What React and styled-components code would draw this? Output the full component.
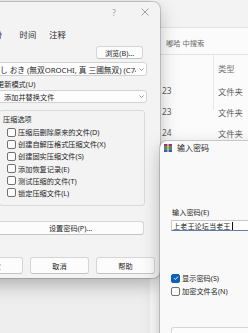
import React from 'react';
import styled, { createGlobalStyle } from 'styled-components';

const GlobalStyle = createGlobalStyle`
  html, body { margin: 0; padding: 0; }
  body {
    background: #efefef;
    font-family: "Noto Sans", "Noto Sans CJK SC", sans-serif;
  }
`;

const Screen = styled.div`
  position: relative;
  width: 248px;
  height: 333px;
  overflow: hidden;
  background: #eeeeee;
`;

/* ---------- explorer window behind ---------- */

const Explorer = styled.div`
  position: absolute;
  left: 150px;
  top: 0;
  width: 110px;
  height: 333px;
  background: #fbfbfb;
  display: flex;
  flex-direction: column;
  color: #4a4a4a;
  font-size: 8.3px;
`;

const ExToolbar = styled.div`
  flex: none;
  height: 27px;
  background: #f3f3f3;
  border-bottom: 1px solid #e2e2e2;
`;

const SearchRow = styled.div`
  flex: none;
  height: 27px;
  box-sizing: border-box;
  padding: 3px 0 0 16px;
  display: flex;
  align-items: center;
  border-bottom: 1px solid #e4e4e4;
  color: #6a6a6a;
  font-size: 7.3px;
`;

const List = styled.div`
  position: relative;
  display: flex;
  flex-direction: column;
`;

const ColDivider = styled.div`
  position: absolute;
  left: 63px;
  top: 0;
  width: 1px;
  height: 55px;
  background: #e6e6e6;
`;

const ListRow = styled.div`
  height: ${p => p.$h}px;
  display: grid;
  grid-template-columns: 63px 1fr;
  align-items: center;
  color: ${p => (p.$head ? '#777' : '#5a5a5a')};
`;

const NameCell = styled.span`
  padding-left: 12px;
`;

const TypeCell = styled.span`
  padding-left: 5px;
`;

/* ---------- dialogs ---------- */

const Dialog = styled.div`
  position: absolute;
  left: ${p => p.$x}px;
  top: ${p => p.$y}px;
  width: ${p => p.$w}px;
  height: ${p => p.$h}px;
  box-sizing: border-box;
  background: ${p => p.$bg};
  border-radius: 7px;
  box-shadow: 0 0 0 1px rgba(0, 0, 0, 0.16), 0 7px 18px rgba(0, 0, 0, 0.26);
  display: flex;
  flex-direction: column;
  overflow: hidden;
  color: #262626;
  font-size: 7.2px;
`;

const TitleBar = styled.div`
  flex: none;
  height: ${p => p.$h}px;
  display: flex;
  align-items: center;
  justify-content: ${p => (p.$end ? 'flex-end' : 'flex-start')};
  padding-left: ${p => p.$pl || 0}px;
  gap: ${p => p.$gap || 0}px;
`;

const Caption = styled.span`
  font-size: 8px;
  color: #1f1f1f;
`;

const CaptionBtn = styled.span`
  width: ${p => p.$w}px;
  height: 100%;
  display: flex;
  align-items: center;
  justify-content: center;
  color: #9a9a9a;
  font-size: 8px;
`;

const TabStrip = styled.div`
  flex: none;
  margin-top: 4px;
  height: 15px;
  display: flex;
  padding-left: 19px;
  font-size: 8.3px;
  color: #2a2a2a;
`;

const Tab = styled.span`
  display: flex;
  align-items: center;
  padding: 0 ${p => p.$pr || 6.5}px 0 6.5px;
`;

const Body = styled.div`
  display: flex;
  flex-direction: column;
  padding: 0 ${p => p.$pr || 0}px 0 ${p => p.$pl}px;
`;

const PushButton = styled.div`
  box-sizing: border-box;
  height: ${p => p.$h}px;
  width: ${p => (p.$w ? `${p.$w}px` : 'auto')};
  margin-top: ${p => p.$mt || 0}px;
  margin-right: ${p => p.$mr || 0}px;
  align-self: ${p => p.$align || 'stretch'};
  background: #fcfcfc;
  border: 1px solid #d6d6d6;
  border-bottom-color: #c4c4c4;
  border-radius: 3px;
  display: flex;
  align-items: center;
  justify-content: center;
  flex: none;
`;

const Combo = styled.div`
  box-sizing: border-box;
  height: ${p => p.$h}px;
  margin-top: ${p => p.$mt}px;
  background: #fdfdfd;
  border: 1px solid #d2d2d2;
  border-radius: 3px;
  display: flex;
  align-items: center;
  padding-left: ${p => p.$pl}px;
  overflow: hidden;
  font-size: ${p => p.$fs || 7.2}px;
`;

const ComboText = styled.span`
  flex: 1;
  white-space: nowrap;
  overflow: hidden;
`;

const Arrow = styled.span`
  flex: none;
  width: 10px;
  display: flex;
  justify-content: center;
`;

const Label = styled.div`
  height: 10px;
  margin-top: ${p => p.$mt}px;
  padding-left: ${p => p.$pl || 0}px;
  display: flex;
  align-items: center;
  white-space: nowrap;
`;

const Group = styled.div`
  margin: ${p => p.$mt}px 2px 0 2px;
  height: ${p => p.$h}px;
  box-sizing: border-box;
  border: 1px solid #dadada;
  border-radius: 3px;
  display: flex;
  flex-direction: column;
  padding-left: 7px;
`;

const GroupTitle = styled.span`
  margin: 3px 0 0 -4px;
  height: 10px;
  display: flex;
  align-items: center;
`;

const CheckRow = styled.div`
  height: 10px;
  margin-top: ${p => p.$mt}px;
  display: flex;
  align-items: center;
  gap: 2px;
  white-space: nowrap;
`;

const Box = styled.span`
  flex: none;
  width: 7px;
  height: 7px;
  border: 1px solid ${p => (p.$on ? '#0b62bd' : '#707070')};
  border-radius: 2px;
  background: ${p => (p.$on ? '#0b62bd' : '#fcfcfc')};
  display: flex;
  align-items: center;
  justify-content: center;
`;

const ButtonRow = styled.div`
  display: flex;
  gap: 7px;
  margin-top: ${p => p.$mt}px;
  margin-right: -8px;
  justify-content: flex-end;
`;

const TextInput = styled.div`
  box-sizing: border-box;
  height: 11px;
  margin-top: 3px;
  background: #ffffff;
  border: 1px solid #c9c9c9;
  border-bottom: 1px solid #5a7fb0;
  display: flex;
  align-items: center;
  padding-left: 1px;
  white-space: nowrap;
`;

const Caret = styled.span`
  width: 1px;
  height: 8px;
  margin-left: 1px;
  background: #111;
`;

const Chevron = () => (
  <svg width="5" height="3" viewBox="0 0 5 3">
    <path d="M0.5 0.5 L2.5 2.5 L4.5 0.5" fill="none" stroke="#777" strokeWidth="0.8" />
  </svg>
);

const CloseGlyph = () => (
  <svg width="8" height="8" viewBox="0 0 8 8">
    <path d="M0.5 0.5 L7.5 7.5 M7.5 0.5 L0.5 7.5" stroke="#8c8c8c" strokeWidth="0.8" />
  </svg>
);

const Tick = () => (
  <svg width="6" height="6" viewBox="0 0 6 6">
    <path d="M1 3.1 L2.4 4.5 L5 1.6" fill="none" stroke="#fff" strokeWidth="0.9" />
  </svg>
);

const RarIcon = () => (
  <svg width="8" height="8" viewBox="0 0 8 8">
    <rect x="0" y="0" width="8" height="2.7" fill="#9b2f86" />
    <rect x="0" y="2.7" width="8" height="2.6" fill="#3a9a48" />
    <rect x="0" y="5.3" width="8" height="2.7" fill="#2c5fc4" />
    <rect x="3.2" y="0" width="1.6" height="8" fill="#e2c16a" />
  </svg>
);

const options = [
  '压缩后删除原来的文件(D)',
  '创建自解压格式压缩文件(X)',
  '创建固实压缩文件(S)',
  '添加恢复记录(E)',
  '测试压缩的文件(T)',
  '锁定压缩文件(L)',
];

export default function App() {
  return (
    <Screen>
      <GlobalStyle />

      <Explorer>
        <ExToolbar />
        <SearchRow>嘟哈 中搜索</SearchRow>
        <List>
          <ColDivider />
          <ListRow $h={25} $head>
            <NameCell />
            <TypeCell>类型</TypeCell>
          </ListRow>
          <ListRow $h={21}>
            <NameCell>23</NameCell>
            <TypeCell>文件夹</TypeCell>
          </ListRow>
          <ListRow $h={21}>
            <NameCell>23</NameCell>
            <TypeCell>文件夹</TypeCell>
          </ListRow>
          <ListRow $h={21}>
            <NameCell>24</NameCell>
            <TypeCell>文件夹</TypeCell>
          </ListRow>
        </List>
      </Explorer>

      <Dialog $x={-40} $y={2} $w={200} $h={276} $bg="#f3f3f3">
        <TitleBar $h={20} $end>
          <CaptionBtn $w={32}>?</CaptionBtn>
          <CaptionBtn $w={30}>
            <CloseGlyph />
          </CaptionBtn>
        </TitleBar>
        <TabStrip>
          <Tab $pr={11}>备份</Tab>
          <Tab>时间</Tab>
          <Tab>注释</Tab>
        </TabStrip>
        <Body $pl={37} $pr={13}>
          <PushButton $h={13} $w={47} $mt={5} $mr={4} $align="flex-end">
            浏览(B)...
          </PushButton>
          <Combo $h={14} $mt={3} $pl={2} $fs={7.7}>
            <ComboText>し おき (無双OROCHI, 真 三國無双) (C74).rar</ComboText>
            <Arrow>
              <Chevron />
            </Arrow>
          </Combo>
          <Label $mt={3}>更新模式(U)</Label>
          <Combo $h={13} $mt={1} $pl={6}>
            <ComboText>添加并替换文件</ComboText>
            <Arrow>
              <Chevron />
            </Arrow>
          </Combo>
          <Group $mt={7} $h={96}>
            <GroupTitle>压缩选项</GroupTitle>
            {options.map((o, i) => (
              <CheckRow key={o} $mt={i === 0 ? 3 : 2.2}>
                <Box />
                {o}
              </CheckRow>
            ))}
          </Group>
          <PushButton $h={14} $mt={15} $mr={3}>
            设置密码(P)...
          </PushButton>
          <ButtonRow $mt={22}>
            <PushButton $h={17} $w={59}>确定</PushButton>
            <PushButton $h={17} $w={59}>取消</PushButton>
            <PushButton $h={17} $w={59}>帮助</PushButton>
          </ButtonRow>
        </Body>
      </Dialog>

      <Dialog $x={160} $y={141} $w={110} $h={220} $bg="#f9f9f9">
        <TitleBar $h={13} $pl={4} $gap={5}>
          <RarIcon />
          <Caption>输入密码</Caption>
        </TitleBar>
        <Body $pl={11}>
          <Label $mt={53} $pl={1}>输入密码(E)</Label>
          <TextInput>
            上老王论坛当老王
            <Caret />
          </TextInput>
          <CheckRow $mt={42}>
            <Box $on>
              <Tick />
            </Box>
            显示密码(S)
          </CheckRow>
          <CheckRow $mt={3}>
            <Box />
            加密文件名(N)
          </CheckRow>
          <PushButton $h={20} $mt={31}>
            整理密码(O)...
          </PushButton>
        </Body>
      </Dialog>
    </Screen>
  );
}
